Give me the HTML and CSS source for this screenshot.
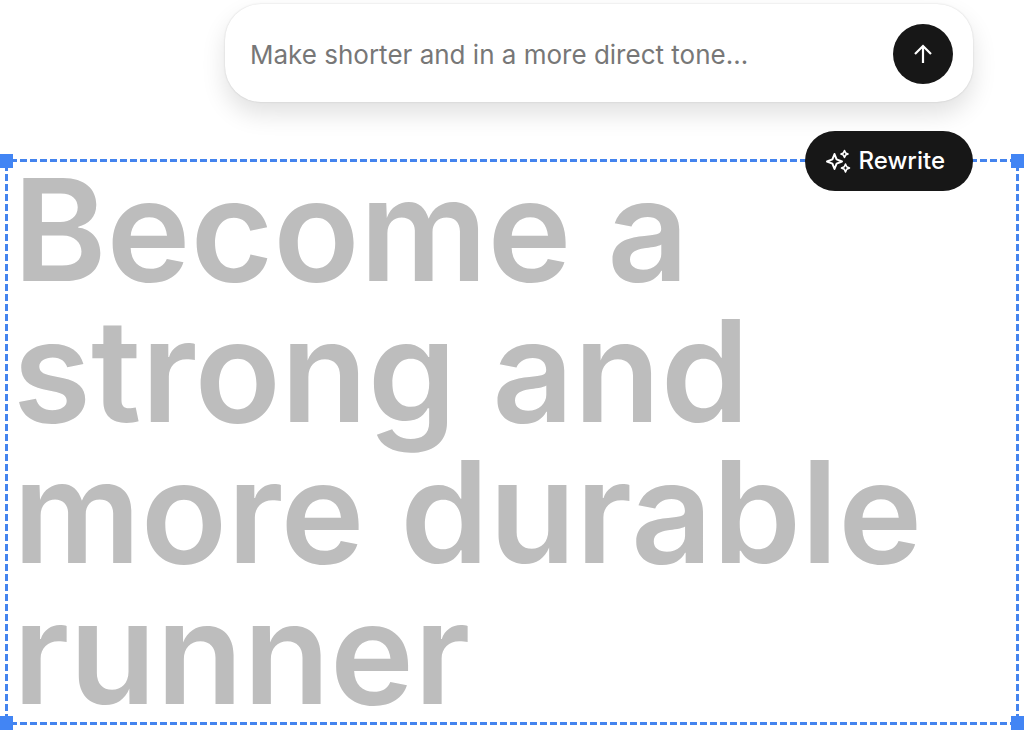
FILE: index.html
```
<!DOCTYPE html>
<html lang="en">
<head>
<meta charset="utf-8">
<meta name="viewport" content="width=device-width, initial-scale=1">
<title>Rewrite text</title>
<link rel="stylesheet" href="styles.css">
</head>
<body>
<main class="editor">
  <form class="prompt">
    <input class="prompt-input" type="text" aria-label="Rewrite instructions" placeholder="Make shorter and in a more direct tone…">
    <button class="send" type="button" aria-label="Send">
      <svg width="24" height="24" viewBox="0 0 24 24" fill="none" stroke="currentColor" stroke-width="2.200" aria-hidden="true"><path d="M12 21V4.500M4 12l8-8 8 8"/></svg>
    </button>
  </form>
  <section class="frame">
    <h1 class="headline">Become a strong and more durable runner</h1>
    <button class="rewrite" type="button">
      <svg class="sparkles" width="26" height="26" viewBox="0 0 26 26" fill="none" stroke="currentColor" stroke-width="2" stroke-linejoin="round" aria-hidden="true"><path d="M9.500 6 11.600 11.400 17 13.500 11.600 15.600 9.500 21 7.400 15.600 2 13.500 7.400 11.400Z"/><path stroke-width="1.600" d="M19.500 2.500 20.600 4.900 23 6 20.600 7.100 19.500 9.500 18.400 7.100 16 6 18.400 4.900Z"/><path stroke-width="1.600" d="M20.500 16 21.700 18.800 24.500 20 21.700 21.200 20.500 24 19.300 21.200 16.500 20 19.300 18.800Z"/></svg>
      Rewrite
    </button>
    <span class="handle top left"></span>
    <span class="handle top right"></span>
    <span class="handle bottom left"></span>
    <span class="handle bottom right"></span>
  </section>
</main>
</body>
</html>
```
FILE: styles.css
```
* { box-sizing: border-box; }

body {
  margin: 0;
  background: #fff;
  font-family: Inter, "Liberation Sans", sans-serif;
}

.editor {
  display: flex;
  flex-direction: column;
  gap: 57px;
  padding: 4px 5px 5px;
}

.prompt {
  display: flex;
  align-items: center;
  gap: 16px;
  width: 74%;
  max-width: 748px;
  min-width: 320px;
  margin: 0 46px 0 auto;
  padding: 20px 20px 18px 25px;
  border-radius: 36px;
  background: #fff;
  box-shadow: 0 0 2px rgba(0, 0, 0, .16), 0 12px 24px rgba(0, 0, 0, .12);
}

.prompt-input {
  flex: 1;
  min-width: 0;
  padding: 1px 0 0;
  border: 0;
  outline: 0;
  background: none;
  color: #222;
  font: 400 26px/32px Inter, "Liberation Sans", sans-serif;
}

.prompt-input::placeholder { color: #777; opacity: 1; }

.send {
  display: grid;
  place-items: center;
  flex: none;
  width: 60px;
  height: 60px;
  padding: 0;
  border: 0;
  border-radius: 50%;
  background: #171717;
  color: #fff;
}

.frame {
  position: relative;
  padding: 0 8px;
  min-height: 566px;
  background:
    linear-gradient(90deg, #4484ee 7px, transparent 7px) 5px 0 / 10px 3px repeat-x,
    linear-gradient(90deg, #4484ee 7px, transparent 7px) 5px 100% / 10px 3px repeat-x,
    linear-gradient(#4484ee 7px, transparent 7px) 0 5px / 3px 10px repeat-y,
    linear-gradient(#4484ee 7px, transparent 7px) 100% 5px / 3px 10px repeat-y;
}

.headline {
  margin: 0;
  color: #bdbdbd;
  font-size: 142px;
  font-weight: 600;
  line-height: 141px;
}

.rewrite {
  position: absolute;
  top: -28px;
  right: 46px;
  display: flex;
  align-items: center;
  gap: 8px;
  height: 60px;
  padding: 0 28px 0 20px;
  border: 0;
  border-radius: 30px;
  background: #171717;
  color: #fff;
  font: 500 24px/28px Inter, "Liberation Sans", sans-serif;
}

.sparkles { flex: none; }

.handle {
  position: absolute;
  width: 14px;
  height: 14px;
  background: #4285f4;
}

.top { top: -5px; }
.bottom { bottom: -5px; }
.left { left: -6px; }
.right { right: -6px; }
```
